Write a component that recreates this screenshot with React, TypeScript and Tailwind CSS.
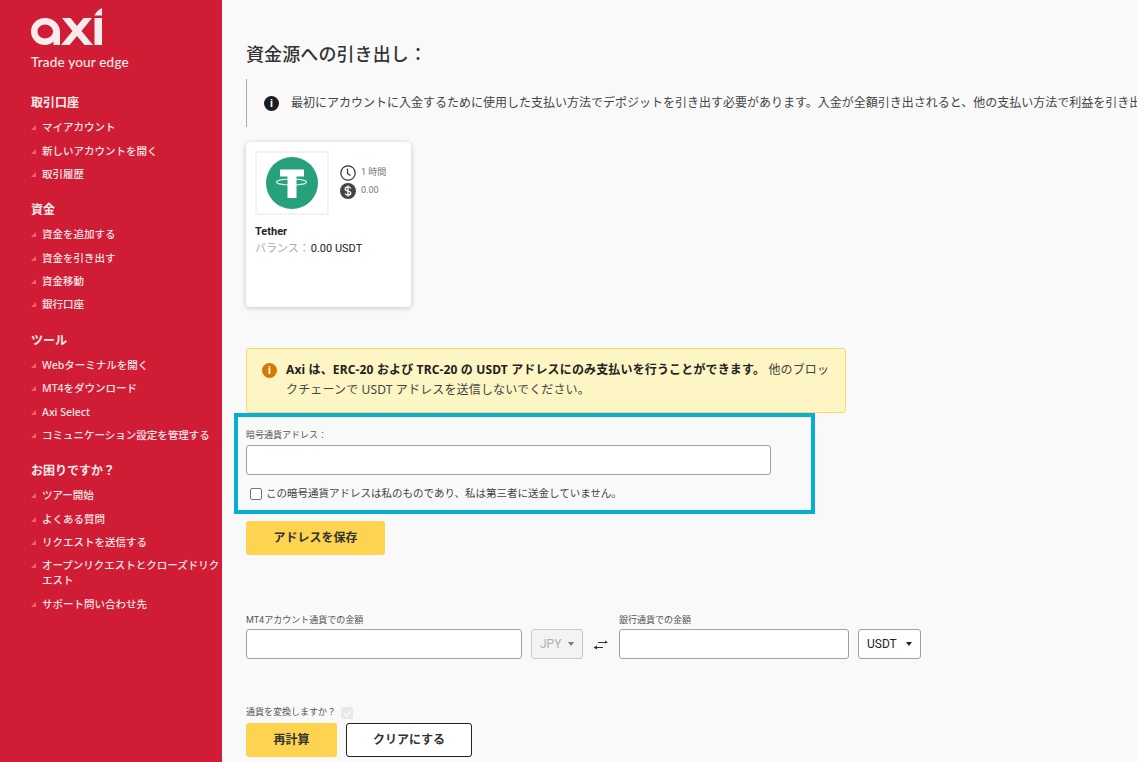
const sections = [
  { title: "取引口座", items: ["マイアカウント", "新しいアカウントを開く", "取引履歴"] },
  { title: "資金", items: ["資金を追加する", "資金を引き出す", "資金移動", "銀行口座"] },
  { title: "ツール", items: ["Webターミナルを開く", "MT4をダウンロード", "Axi Select", "コミュニケーション設定を管理する"] },
  {
    title: "お困りですか？",
    items: ["ツアー開始", "よくある質問", "リクエストを送信する", "オープンリクエストとクローズドリクエスト", "サポート問い合わせ先"],
  },
];

function Logo() {
  return (
    <svg width="72" height="38" viewBox="0 0 72 38" className="block">
      <g fill="#f6ecec">
        <path fillRule="evenodd" d="M14 10C6 10 0 16 0 23.500S6 37 14 37c3.500 0 6.500-1.200 8.500-3.500V37H29V23.500C29 16 22 10 14 10zm0 6.500c3.900 0 8 3.100 8 7s-4.100 7-8 7-7.500-3.100-7.500-7 3.600-7 7.500-7z" />
        <path d="M31 10h8.500l6.500 8 6.500-8H61L50.500 23 62 37h-8.500L46 28l-7.500 9H30l11.500-14z" />
        <path d="M63.500 10H71v27h-7.500z" />
        <path d="M71 0v7.500h-7.500C65 4 67.500 1.800 71 0z" />
      </g>
    </svg>
  );
}

function TetherLogo() {
  return (
    <svg width="52" height="52" viewBox="0 0 52 52">
      <circle cx="26" cy="26" r="26" fill="#26a17b" />
      <ellipse cx="25.500" cy="25" rx="15" ry="3" fill="none" stroke="#d4eee6" strokeWidth="1.200" />
      <path d="M14 12.500h24v7h-7.500V41h-9V19.500H14z" fill="#fff" />
    </svg>
  );
}

function Sidebar() {
  return (
    <aside className="w-[222px] shrink-0 bg-[#d01d35] pl-[31px] pt-[8px] text-[#f6e4e6]">
      <Logo />
      <div className="mt-[7px] font-['Lato',sans-serif] text-[13.500px] leading-[18px] font-medium tracking-[0.2px] text-[#f6ecec]">Trade your edge</div>
      {sections.map((s, i) => (
        <div key={s.title} className={i === 0 ? "mt-[22px]" : "mt-[14px]"}>
          <div className="text-[12px] leading-[20px] font-bold text-[#f8ecec]">{s.title}</div>
          <ul className="mt-[3px]">
            {s.items.map((item) => (
              <li key={item} className="flex py-[4.200px]">
                <span className="mt-[5px] mr-[6px] h-0 w-0 shrink-0 border-b-[5px] border-l-[5px] border-b-[#f5606e] border-l-transparent" />
                <span className="font-['Noto_Sans','Noto_Sans_CJK_JP',sans-serif] text-[10.500px] leading-[15px] font-medium">{item}</span>
              </li>
            ))}
          </ul>
        </div>
      ))}
    </aside>
  );
}

function ClockIcon() {
  return (
    <svg width="16" height="16" viewBox="0 0 16 16" fill="none" stroke="#333" strokeWidth="1.200">
      <circle cx="8" cy="8" r="7.200" />
      <path d="M7.500 3.500v5l3 2" />
    </svg>
  );
}

function DollarIcon() {
  return (
    <svg width="16" height="16" viewBox="0 0 16 16">
      <circle cx="8" cy="8" r="8" fill="#444" />
      <path d="M10.800 5.600C10.300 4.400 9.200 3.900 8 3.900c-1.500 0-2.800.8-2.800 2.100 0 2.900 5.600 1.400 5.600 4 0 1.300-1.300 2.100-2.800 2.100-1.200 0-2.300-.5-2.800-1.700M8 2.500v11" fill="none" stroke="#fff" strokeWidth="1.300" />
    </svg>
  );
}

function SwapIcon() {
  return (
    <svg width="16" height="10" viewBox="0 0 16 10" className="mx-[10px] mb-[9px]">
      <path d="M5 2.500h9" stroke="#333" strokeWidth="1" fill="none" />
      <path d="M12 0.500l3 2-3 1z" fill="#333" />
      <path d="M1 7.500h9" stroke="#333" strokeWidth="1" fill="none" />
      <path d="M4 5.500l-3.500 2 3.500 2z" fill="#333" />
    </svg>
  );
}

function SelectBox({ label, disabled }: { label: string; disabled?: boolean }) {
  return (
    <div
      className={
        disabled
          ? "flex h-[30px] w-[52px] items-center justify-between rounded-[3px] border border-[#c8c8c8] bg-[#f3f3f3] pr-[8px] pl-[8px] text-[12px] text-[#b0b0b0]"
          : "flex h-[30px] w-[63px] items-center justify-between rounded-[3px] border border-[#a0a0a0] bg-white pr-[8px] pl-[8px] text-[12px] text-[#222]"
      }
    >
      <span>{label}</span>
      <span className={disabled ? "h-0 w-0 border-x-[3.500px] border-t-[4px] border-x-transparent border-t-[#777]" : "h-0 w-0 border-x-[3.500px] border-t-[4px] border-x-transparent border-t-[#222]"} />
    </div>
  );
}

export default function App() {
  return (
    <div className="flex h-[762px] w-[1137px] overflow-hidden bg-[#f9f9f9] font-['Roboto','Noto_Sans_CJK_JP',sans-serif] text-[#222]">
      <Sidebar />
      <main className="min-w-0 flex-1 pl-[24px]">
        <h1 className="mt-[42px] text-[18px] leading-[26px] font-medium tracking-[0.1px] text-[#333]">資金源への引き出し：</h1>
        <div className="mt-[11px] flex h-[48px] items-center overflow-hidden border-l border-[#aaa] pl-[17px] whitespace-nowrap">
          <span className="flex h-[15px] w-[15px] shrink-0 items-center justify-center rounded-full bg-[#1c1c1c] text-[11px] leading-none font-bold text-white">i</span>
          <span className="ml-[12px] text-[12px] text-[#444]">
            最初にアカウントに入金するために使用した支払い方法でデポジットを引き出す必要があります。入金が全額引き出されると、他の支払い方法で利益を引き出すことができます。
          </span>
        </div>

        <div className="mt-[15px] h-[165px] w-[165px] rounded-[4px] bg-white p-[9px] shadow-[0_1px_5px_rgba(0,0,0,0.22)]">
          <div className="flex">
            <div className="flex h-[64px] w-[74px] items-center justify-center border-2 border-[#f3f3f3]">
              <TetherLogo />
            </div>
            <div className="mt-[13px] ml-[11px] text-[9px] text-[#777]">
              <div className="flex h-[18px] items-center gap-[5px]">
                <ClockIcon />
                <span>1 時間</span>
              </div>
              <div className="flex h-[18px] items-center gap-[5px]">
                <DollarIcon />
                <span>0.00</span>
              </div>
            </div>
          </div>
          <div className="mt-[8px] text-[11px] leading-[17px] font-bold text-[#222]">Tether</div>
          <div className="flex text-[11px] leading-[17px]">
            <span className="text-[#aaa]">バランス：</span>
            <span className="ml-[1px] text-[#222]">0.00 USDT</span>
          </div>
        </div>

        <div className="mt-[41px] h-[65px] w-[600px] rounded-[3px] border border-[#fbd86a] bg-[#fdf5c4] pt-[11px] pr-[14px] pl-[15px]">
          <div className="flex">
            <span className="mt-[3px] flex h-[15px] w-[15px] shrink-0 items-center justify-center rounded-full bg-[#d97706] text-[11px] leading-none font-bold text-white">i</span>
            <p className="ml-[9px] font-['Noto_Sans','Noto_Sans_CJK_JP',sans-serif] text-[12px] leading-[20px] tracking-[0.15px] text-[#444]">
              <b className="font-bold text-[#222]">Axi は、ERC-20 および TRC-20 の USDT アドレスにのみ支払いを行うことができます。</b> 他のブロックチェーンで USDT アドレスを送信しないでください。
            </p>
          </div>
        </div>

        <div className="-ml-[12px] h-[101px] w-[581px] border-4 border-[#05aed2] pt-[11px] pl-[8px]">
          <div className="text-[9px] leading-[14px] text-[#555]">暗号通貨アドレス：</div>
          <div className="mt-[3px] h-[30px] w-[525px] rounded-[3px] border border-[#a0a0a0] bg-white" />
          <label className="mt-[12px] ml-[4px] flex items-center">
            <input type="checkbox" className="h-[12px] w-[12px] appearance-none rounded-[2px] border border-[#777] bg-white" />
            <span className="ml-[4px] text-[10.500px] leading-[14px] text-[#444]">この暗号通貨アドレスは私のものであり、私は第三者に送金していません。</span>
          </label>
        </div>

        <button className="mt-[7px] block h-[34px] w-[139px] rounded-[3px] bg-[#fdd34f] text-[12px] font-bold text-[#333]">アドレスを保存</button>

        <div className="mt-[58px] flex items-end">
          <div>
            <div className="text-[9px] leading-[14px] text-[#555]">MT4アカウント通貨での金額</div>
            <div className="mt-[2px] h-[30px] w-[276px] rounded-[3px] border border-[#a0a0a0] bg-white" />
          </div>
          <div className="ml-[9px]">
            <SelectBox label="JPY" disabled />
          </div>
          <SwapIcon />
          <div>
            <div className="text-[9px] leading-[14px] text-[#555]">銀行通貨での金額</div>
            <div className="mt-[2px] h-[30px] w-[230px] rounded-[3px] border border-[#a0a0a0] bg-white" />
          </div>
          <div className="ml-[9px]">
            <SelectBox label="USDT" />
          </div>
        </div>

        <div className="mt-[46px] flex h-[16px] items-center text-[9px] text-[#555]">
          <span>通貨を変換しますか？</span>
          <span className="ml-[5px] flex h-[12px] w-[12px] items-center justify-center rounded-[2px] bg-[#e8e8e8]">
            <svg width="9" height="9" viewBox="0 0 9 9" fill="none" stroke="#f8f8f8" strokeWidth="1.500">
              <path d="M1 4.500l2.500 2.500L8 2" />
            </svg>
          </span>
        </div>
        <div className="mt-[2px] flex gap-[9px]">
          <button className="h-[34px] w-[91px] rounded-[3px] bg-[#fdd34f] text-[12px] font-bold text-[#333]">再計算</button>
          <button className="h-[34px] w-[126px] rounded-[3px] border border-[#222] bg-white text-[12px] font-bold text-[#333]">クリアにする</button>
        </div>
      </main>
    </div>
  );
}
